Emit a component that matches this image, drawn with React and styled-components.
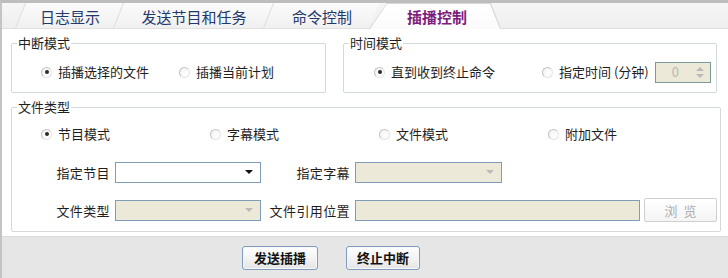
import React from "react";
import styled, {createGlobalStyle} from "styled-components";

const GlobalStyle = createGlobalStyle`
  html, body {
    margin: 0;
    padding: 0;
    background: #fff;
  }

  body {
    font-family: "Noto Sans CJK SC", "Noto Sans", sans-serif;
    font-size: 13px;
    color: #1e1e1e;
  }
`;

const tabs = [
    {label: "日志显示", width: 98},
    {label: "发送节目和任务", width: 150},
    {label: "命令控制", width: 106},
    {label: "插播控制", width: 132, active: true},
];

const App = () => {
    return (
        <>
            <GlobalStyle/>
            <Window>
                <TabStrip>
                    {tabs.map((t) => (
                        <Tab key={t.label} $w={t.width} $active={t.active}>
                            {t.label}
                        </Tab>
                    ))}
                </TabStrip>

                <Content>
                    <TopRow>
                        <Group $w={315}>
                            <Legend>中断模式</Legend>
                            <OptionRow $pad={29} $gap={30}>
                                <Option><Radio $checked/>插播选择的文件</Option>
                                <Option><Radio/>插播当前计划</Option>
                            </OptionRow>
                        </Group>

                        <Group $w={374}>
                            <Legend>时间模式</Legend>
                            <OptionRow $pad={30} $gap={47}>
                                <Option><Radio $checked/>直到收到终止命令</Option>
                                <Option>
                                    <Radio/>指定时间 (分钟)
                                    <Spin>
                                        <span>0</span>
                                        <SpinArrows>
                                            <Arrow $up $muted/>
                                            <Arrow $muted/>
                                        </SpinArrows>
                                    </Spin>
                                </Option>
                            </OptionRow>
                        </Group>
                    </TopRow>

                    <Group $w={710} $big>
                        <Legend>文件类型</Legend>
                        <TypeGrid>
                            <Option><Radio $checked/>节目模式</Option>
                            <Option><Radio/>字幕模式</Option>
                            <Option><Radio/>文件模式</Option>
                            <Option><Radio/>附加文件</Option>
                        </TypeGrid>

                        <FieldRow>
                            <Label $w={98}>指定节目</Label>
                            <Select $w={146}>
                                <Arrow/>
                            </Select>
                            <Label $w={89}>指定字幕</Label>
                            <Select $w={147} $disabled>
                                <Arrow $muted/>
                            </Select>
                        </FieldRow>

                        <FieldRow>
                            <Label $w={98}>文件类型</Label>
                            <Select $w={146} $disabled>
                                <Arrow $muted/>
                            </Select>
                            <Label $w={89}>文件引用位置</Label>
                            <Select $w={285} $disabled/>
                            <BrowseBtn>浏&nbsp;&nbsp;览</BrowseBtn>
                        </FieldRow>
                    </Group>
                </Content>

                <BottomBar>
                    <ActionBtn $w={76}>发送插播</ActionBtn>
                    <ActionBtn $w={74}>终止中断</ActionBtn>
                </BottomBar>
            </Window>
        </>
    );
};

const Window = styled.div`
  width: 728px;
  height: 278px;
  box-sizing: border-box;
  border-top: 3px solid #bdbdbd;
  border-left: 2px solid #c4c4c4;
  display: flex;
  flex-direction: column;
  background: #fff;
  overflow: hidden;
`;

const TabStrip = styled.div`
  height: 25px;
  flex: none;
  display: flex;
  align-items: flex-end;
  padding-left: 13px;
  background: linear-gradient(#f6f6f6, #eeeeee);
  border-bottom: 1px solid #e0e0e0;
`;

const Tab = styled.div`
  position: relative;
  z-index: ${(p) => (p.$active ? 3 : 1)};
  flex: none;
  box-sizing: border-box;
  width: ${(p) => p.$w}px;
  height: ${(p) => (p.$active ? 26 : 25)}px;
  margin-bottom: ${(p) => (p.$active ? -1 : 0)}px;
  display: flex;
  align-items: center;
  justify-content: center;
  padding-left: ${(p) => (p.$active ? 4 : 12)}px;
  padding-top: 1px;
  font-size: 15px;
  font-weight: ${(p) => (p.$active ? 700 : 400)};
  color: ${(p) => (p.$active ? "#7d1d7d" : "#23386b")};

  &::before {
    content: "";
    position: absolute;
    inset: 0;
    z-index: -1;
    ${(p) =>
            p.$active
                    ? `
      background: #d6d6d6;
      clip-path: polygon(0 100%, 18px 0, calc(100% - 10px) 0, 100% 100%);
    `
                    : `
      transform: skewX(-22deg);
      transform-origin: bottom left;
      border-left: 1px solid #dedede;
      background: linear-gradient(#fbfbfb, #f0f0f0);
    `}
  }

  &::after {
    content: "";
    position: absolute;
    inset: 1px 1px 0 1px;
    z-index: -1;
    display: ${(p) => (p.$active ? "block" : "none")};
    background: linear-gradient(#ffffff, #fbfbfb);
    clip-path: polygon(0 100%, 17px 0, calc(100% - 10px) 0, 100% 100%);
  }
`;

const Content = styled.div`
  flex: 1;
  display: flex;
  flex-direction: column;
  gap: 6px;
  padding: 6px 0 3px 9px;
`;

const TopRow = styled.div`
  display: flex;
  gap: 17px;
`;

const Group = styled.fieldset`
  box-sizing: border-box;
  width: ${(p) => p.$w}px;
  margin: 0;
  min-width: 0;
  padding: ${(p) => (p.$big ? "7px 0 9px" : "11px 0 10px")};
  border: 1px solid #d3d8dc;
  border-radius: 2px;
  display: flex;
  flex-direction: column;
  gap: 14px;
`;

const Legend = styled.legend`
  margin-left: 5px;
  padding: 0 1px;
  line-height: 16px;
  font-size: 13px;
  color: #1e1e1e;
`;

const OptionRow = styled.div`
  display: flex;
  align-items: center;
  height: 20px;
  padding-left: ${(p) => p.$pad}px;
  gap: ${(p) => p.$gap}px;
`;

const TypeGrid = styled.div`
  display: grid;
  grid-template-columns: repeat(4, 169px);
  align-items: center;
  height: 24px;
  padding-left: 29px;
`;

const Option = styled.label`
  display: flex;
  align-items: center;
  gap: 6px;
  white-space: nowrap;
  line-height: 20px;
`;

const Radio = styled.span`
  flex: none;
  box-sizing: border-box;
  width: 11px;
  height: 11px;
  border-radius: 50%;
  border: 1px solid #c2c2c2;
  border-right-color: #e6e6e6;
  border-bottom-color: #e6e6e6;
  background: radial-gradient(circle at 65% 65%, #ffffff, #f0f0f0);
  display: flex;
  align-items: center;
  justify-content: center;

  &::after {
    content: "";
    display: ${(p) => (p.$checked ? "block" : "none")};
    width: 4px;
    height: 4px;
    border-radius: 50%;
    background: #2a2a2a;
  }
`;

const Spin = styled.div`
  box-sizing: border-box;
  width: 56px;
  height: 21px;
  border: 1px solid #7b9a9a;
  background: #ece9d8;
  display: flex;
  align-items: center;
  justify-content: space-between;
  padding: 0 6px 0 16px;
  color: #b8b8b0;
`;

const SpinArrows = styled.div`
  display: flex;
  flex-direction: column;
  gap: 3px;
`;

const Arrow = styled.span`
  width: 0;
  height: 0;
  border-left: 4px solid transparent;
  border-right: 4px solid transparent;
  ${(p) =>
          p.$up
                  ? `border-bottom: 4px solid ${p.$muted ? "#b9b9b9" : "#111"};`
                  : `border-top: 4px solid ${p.$muted ? "#b9b9b9" : "#111"};`}
`;

const FieldRow = styled.div`
  display: flex;
  align-items: center;
  height: 24px;
`;

const Label = styled.span`
  flex: none;
  width: ${(p) => p.$w}px;
  margin-right: 5px;
  text-align: right;
  letter-spacing: 0.4px;
  white-space: nowrap;
`;

const Select = styled.div`
  flex: none;
  box-sizing: border-box;
  width: ${(p) => p.$w}px;
  height: 21px;
  border: 1px solid #7f9db9;
  background: ${(p) => (p.$disabled ? "#ece9d8" : "#fff")};
  display: flex;
  align-items: center;
  justify-content: flex-end;
  padding-right: 7px;
`;

const BrowseBtn = styled.button`
  flex: none;
  box-sizing: border-box;
  width: 73px;
  height: 24px;
  margin-left: 4px;
  border: 1px solid #cfcfcf;
  border-radius: 2px;
  background: linear-gradient(#ffffff, #f4f4f4);
  color: #adadad;
  font-family: inherit;
  font-size: 13px;
  padding: 0;
`;

const BottomBar = styled.div`
  height: 42px;
  flex: none;
  box-sizing: border-box;
  display: flex;
  align-items: center;
  gap: 28px;
  padding-left: 240px;
  background: #e6e6e6;
  border-top: 1px solid #dadada;
`;

const ActionBtn = styled.button`
  box-sizing: border-box;
  width: ${(p) => p.$w}px;
  height: 24px;
  padding: 0;
  border: 1px solid #7f9cc0;
  border-radius: 3px;
  background: linear-gradient(#ffffff, #f1f1f1 60%, #e4e4e4);
  box-shadow: inset 0 0 0 1px #f8f8f8;
  font-family: inherit;
  font-size: 13px;
  font-weight: 700;
  color: #111;
`;

export default App;
